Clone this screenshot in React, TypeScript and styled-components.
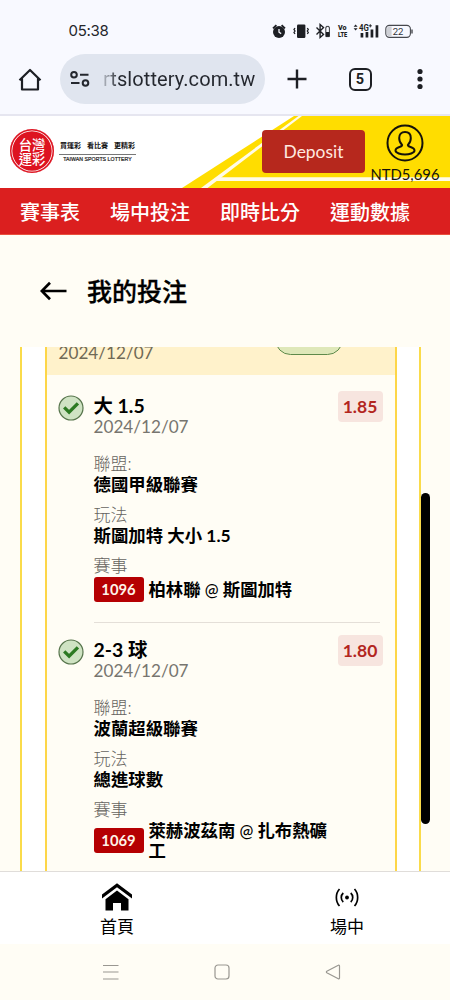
import React from "react";
import styled, { createGlobalStyle } from "styled-components";

const Global = createGlobalStyle`
  * { box-sizing: border-box; }
  body { margin: 0; background: #fffdf5; }
`;

const Screen = styled.div`
  width: 450px;
  height: 1000px;
  display: flex;
  flex-direction: column;
  overflow: hidden;
  background: #fffdf5;
  color: #000;
  font-family: Lato, "Noto Sans CJK TC", sans-serif;
`;

const StatusBar = styled.div`
  height: 54px;
  padding: 7px 36px 0 68.5px;
  display: flex;
  align-items: center;
  justify-content: space-between;
  background: #f8f9ff;
`;

const Clock = styled.span`
  font: 400 15px/20px Inter, sans-serif;
  letter-spacing: -0.3px;
  color: #24262b;
`;

const BrowserBar = styled.div`
  height: 62px;
  display: flex;
  align-items: flex-start;
  background: #f8f9ff;
  border-bottom: 2px solid #e6e6f0;
`;

const HomeButton = styled.div`
  width: 60px;
  padding: 14px 0 0 18px;
`;

const AddressBar = styled.div`
  width: 205px;
  height: 50px;
  padding-left: 10px;
  display: flex;
  align-items: center;
  border-radius: 25px;
  background: #e0e5ef;
`;

const Url = styled.span`
  flex: none;
  margin-left: 13px;
  width: 158px;
  overflow: hidden;
  white-space: nowrap;
  font: 400 20px/30px Roboto, sans-serif;
  letter-spacing: 0.08px;
  background: linear-gradient(90deg, #b9bec8 0, #24272e 16px);
  background-clip: text;
  -webkit-background-clip: text;
  color: transparent;
`;

const BrowserActions = styled.div`
  flex: 1;
  height: 50px;
  padding: 0 25px 0 22px;
  display: flex;
  align-items: center;
  justify-content: space-between;
`;

const TabCount = styled.div`
  width: 23px;
  height: 23px;
  margin-right: 2px;
  border: 2.5px solid #1d1f24;
  border-radius: 6px;
  text-align: center;
  font: 700 14.5px/19px Roboto, sans-serif;
  color: #1d1f24;
`;

const SiteHeader = styled.header`
  position: relative;
  height: 72px;
  display: flex;
  background: #fff;
`;

const HeaderArt = styled.svg`
  position: absolute;
  inset: 0;
`;

const Seal = styled.div`
  position: relative;
  margin: 13px 0 0 10px;
  width: 44px;
  height: 44px;
  border-radius: 50%;
  background: #dd1320;
  box-shadow: inset 0 0 0 1.5px #dd1320, inset 0 0 0 2.3px #fff;
  color: #fff;
  text-align: center;
  padding-top: 9px;
  font: 500 13.3px/13.5px "Noto Sans CJK TC", sans-serif;
`;

const Slogan = styled.div`
  position: relative;
  width: 77px;
  margin: 24px 0 0 5px;
  white-space: nowrap;
`;

const SloganMain = styled.div`
  display: flex;
  justify-content: space-between;
  height: 15px;
  padding: 0 1px;
  border-bottom: 1px solid #777;
  font: 700 7px/11px "Noto Sans CJK TC", sans-serif;
  color: #111;
`;

const SloganSub = styled.div`
  font: 400 5.2px/9px "Liberation Sans", sans-serif;
  -webkit-text-stroke: 0.2px #222;
  text-align: center;
  letter-spacing: 0.05px;
  color: #222;
`;

const DepositButton = styled.button`
  position: relative;
  margin: 14px 0 0 126px;
  width: 103px;
  height: 43px;
  border: 0;
  border-radius: 4px;
  background: #b6281d;
  color: #ffeae0;
  font: 400 17.4px/24px Lato, sans-serif;
`;

const Account = styled.div`
  position: relative;
  width: 80px;
  padding-top: 7px;
  display: flex;
  flex-direction: column;
  align-items: center;
  font-size: 14.8px;
  line-height: 22px;
  color: #15120a;
  white-space: nowrap;
`;

const MainNav = styled.nav`
  height: 47px;
  padding: 0 20px;
  display: flex;
  gap: 30px;
  background: #db1f1f;
  border-bottom: 1px solid #e9503d;
  color: #fff;
  font-size: 20px;
  line-height: 48px;
  white-space: nowrap;
`;

const NavItem = styled.span`
  flex: none;
  font-weight: 500;
`;

const TitleBar = styled.div`
  height: 112px;
  padding: 0 0 0 40px;
  display: flex;
  align-items: center;
  gap: 20px;
`;

const PageTitle = styled.h1`
  margin: 0;
  font-size: 25px;
  line-height: 36px;
  font-weight: 500;
  -webkit-text-stroke: 0.3px #000;
`;

const Viewport = styled.main`
  position: relative;
  height: 524px;
  padding: 0 29px 0 20px;
  overflow: hidden;
`;

const OuterCard = styled.div`
  height: 524px;
  padding: 0 22.5px;
  background: #fff;
  border: solid #fadb4a;
  border-width: 0 2.5px;
`;

const TicketCard = styled.div`
  height: 524px;
  background: #fffdf5;
  border: solid #fdd648;
  border-width: 0 2.5px;
`;

const TicketHead = styled.div`
  position: relative;
  height: 28px;
  padding-left: 12px;
  overflow: hidden;
  background: #fff2cb;
  color: #6f6956;
  font-size: 17.15px;
  line-height: 11px;
`;

const StatusPill = styled.div`
  position: absolute;
  left: 228px;
  top: -23px;
  width: 68px;
  height: 31px;
  border: 1.5px solid #5e8a4a;
  border-radius: 16px;
  background: #dfe8b9;
`;

const Bet = styled.section`
  height: 244px;
  padding: 16px 12px 0 11px;
  display: grid;
  grid-template-columns: 36px 1fr 45px;
  align-items: start;
`;

const CheckMark = styled.svg`
  margin-top: 4px;
`;

const BetBody = styled.div`
  white-space: nowrap;
`;

const Pick = styled.div`
  height: 25px;
  font-size: 19.4px;
  line-height: 29px;
  font-weight: 700;
`;

const BetDate = styled.div`
  height: 22px;
  font-size: 17.15px;
  line-height: 21px;
  color: #77756f;
`;

const Field = styled.div`
  height: 51px;
`;

const Fields = styled.div`
  padding-top: 15px;
`;

const Label = styled.div`
  height: 20px;
  font-size: 17px;
  line-height: 22px;
  font-weight: 300;
  color: #66645f;
`;

const Value = styled.div`
  font-size: 17.4px;
  line-height: 23px;
  font-weight: 700;
`;

const MatchRow = styled.div<{ $tall?: boolean }>`
  height: ${(p) => (p.$tall ? 38 : 26)}px;
  margin-top: ${(p) => (p.$tall ? 2 : 1)}px;
  display: flex;
  align-items: center;
  gap: 5px;
`;

const MatchCode = styled.span`
  flex: none;
  width: 50px;
  height: 25px;
  border-radius: 3px;
  background: #b50002;
  color: #fff3e8;
  text-align: center;
  font-size: 14.8px;
  line-height: 25px;
  font-weight: 700;
`;

const Teams = styled.span`
  padding-top: 1px;
  font-size: 17.35px;
  line-height: 19px;
  font-weight: 700;
`;

const At = styled.span`
  font-weight: 500;
  font-size: 16.5px;
`;

const Odds = styled.div`
  height: 31px;
  border-radius: 4px;
  background: #f7e5df;
  color: #b3261e;
  text-align: center;
  font-size: 17.5px;
  line-height: 31px;
  font-weight: 700;
`;

const Divider = styled.div`
  height: 1px;
  margin: 3px 15px -4px 47px;
  background: #e4dfd8;
`;

const ScrollThumb = styled.div`
  position: absolute;
  left: 421px;
  top: 146px;
  width: 9px;
  height: 331px;
  border-radius: 5px;
  background: #000;
`;

const TabBar = styled.nav`
  height: 73px;
  display: flex;
  justify-content: space-between;
  padding: 0 68px 0 82px;
  border-top: 1px solid #e0ddda;
  background: #fff;
`;

const Tab = styled.div`
  width: 70px;
  padding-top: 10px;
  display: flex;
  flex-direction: column;
  align-items: center;
  font-size: 17px;
  line-height: 24px;
`;

const TabIcon = styled.svg`
  flex: none;
  margin: 0 0 3px;
`;

const SystemNav = styled.div`
  flex: 1;
  padding: 0 109px 0 103px;
  display: flex;
  align-items: center;
  justify-content: space-between;
`;

const StatusIcons = () => (
  <svg width="142" height="20" viewBox="272 20 142 20" fill="#1d1f24">
    <g>
      <circle cx="279" cy="31" r="6" />
      <path d="M273 27.4l3.4-3.2M285 27.4l-3.4-3.2" stroke="#1d1f24" strokeWidth="1.8" />
      <path d="M279 28v3.2l2.2 1.4" stroke="#f8f9ff" strokeWidth="1.3" fill="none" />
    </g>
    <rect x="297" y="23.5" width="8.4" height="13.5" rx="1.2" />
    <path d="M295 27l-1 1.5 1 1.5-1 1.5 1 1.5M307.3 27l1 1.5-1 1.5 1 1.5-1 1.5" stroke="#1d1f24" strokeWidth="1.3" fill="none" />
    <path d="M316.5 26.5l7 7-3.4 3V23.5l3.4 3-7 7" stroke="#1d1f24" strokeWidth="1.4" fill="none" />
    <path d="M326.3 25.4h2.6v1h.5v9.2h-3.6v-9.2h.5z" fill="none" stroke="#1d1f24" strokeWidth=".9" />
    <rect x="326" y="31" width="3.4" height="4.6" />
    <text x="338" y="29.4" fontFamily="Roboto" fontWeight="900" fontSize="7.5" textLength="8.6" lengthAdjust="spacingAndGlyphs">Vo</text>
    <text x="338" y="36.4" fontFamily="Roboto" fontWeight="900" fontSize="8" textLength="9.2" lengthAdjust="spacingAndGlyphs">LTE</text>
    <path d="M353.6 25.8l2-2.4 2 2.4zM353.6 27.2l2 2.4 2-2.4z" />
    <text x="359" y="29.8" fontFamily="Roboto" fontWeight="700" fontSize="8.5" textLength="9.8" lengthAdjust="spacingAndGlyphs">4G</text>
    <path d="M368.7 24.8h3.2M370.3 23.2v3.2" stroke="#1d1f24" strokeWidth=".9" />
    <path d="M360.6 32h2.7v4.4h-2.7zM365.6 31h2.7v5.4h-2.7zM370.6 28.5h2.7v7.9h-2.7zM375.6 24.3h2.7v12.1h-2.7z" />
    <rect x="385.8" y="24.4" width="24.6" height="12" rx="3.6" fill="none" stroke="#46484e" strokeWidth="1.1" />
    <path d="M389 25.6h2.6v9.6H389a2 2 0 0 1-2-2v-5.6a2 2 0 0 1 2-2z" fill="#ced0d6" />
    <path d="M412 28.6v3.8" stroke="#46484e" strokeWidth="1.4" />
    <text x="392.4" y="34" fontFamily="Inter" fontSize="9.5" fill="#33353b" textLength="11.2">22</text>
  </svg>
);

interface BetItem {
  pick: string;
  odds: string;
  league: string;
  play: string;
  code: string;
  home: string;
  away: string[];
}

const bets: BetItem[] = [
  { pick: "大 1.5", odds: "1.85", league: "德國甲級聯賽", play: "斯圖加特 大小 1.5", code: "1096", home: "柏林聯", away: ["斯圖加特"] },
  { pick: "2-3 球", odds: "1.80", league: "波蘭超級聯賽", play: "總進球數", code: "1069", home: "萊赫波茲南", away: ["扎布熱礦", "工"] },
];

const BetEntry = ({ bet }: { bet: BetItem }) => (
  <Bet>
    <CheckMark width="26" height="26" viewBox="0 0 26 26">
      <circle cx="13" cy="13" r="12" fill="#cfe3c3" stroke="#56744b" strokeWidth="1.2" />
      <path d="M6.2 12.4l4.9 4.8 8.8-8.8" fill="none" stroke="#2c7a22" strokeWidth="3.3" />
    </CheckMark>
    <BetBody>
      <Pick>{bet.pick}</Pick>
      <BetDate>2024/12/07</BetDate>
      <Fields>
        <Field>
          <Label>聯盟:</Label>
          <Value>{bet.league}</Value>
        </Field>
        <Field>
          <Label>玩法</Label>
          <Value>{bet.play}</Value>
        </Field>
        <Label>賽事</Label>
        <MatchRow $tall={bet.away.length > 1}>
          <MatchCode>{bet.code}</MatchCode>
          <Teams>
            {bet.home} <At>@</At> {bet.away[0]}
            {bet.away[1] && <br />}
            {bet.away[1]}
          </Teams>
        </MatchRow>
      </Fields>
    </BetBody>
    <Odds>{bet.odds}</Odds>
  </Bet>
);

export default function App() {
  return (
    <Screen>
      <Global />
      <StatusBar>
        <Clock>05:38</Clock>
        <StatusIcons />
      </StatusBar>
      <BrowserBar>
        <HomeButton>
          <svg width="24" height="24" viewBox="0 0 24 24" fill="none" stroke="#1d1f24" strokeWidth="2.2" strokeLinejoin="round">
            <path d="M1.5 12.3L12 2l10.5 10.3M4 10.4V21.5h16V10.4" />
          </svg>
        </HomeButton>
        <AddressBar>
          <svg width="20" height="18" viewBox="0 0 20 18" fill="none" stroke="#24272e" strokeWidth="2">
            <circle cx="4" cy="4.7" r="2.8" />
            <circle cx="15.5" cy="13" r="2.8" />
            <path d="M10 4.7h8.5M1 13h8.5" />
          </svg>
          <Url>rtslottery.com.tw</Url>
        </AddressBar>
        <BrowserActions>
          <svg width="20" height="20" viewBox="0 0 20 20" stroke="#1d1f24" strokeWidth="2.4">
            <path d="M10 .5v19M.5 10h19" />
          </svg>
          <TabCount>5</TabCount>
          <svg width="10" height="22" viewBox="0 0 10 22" fill="#1d1f24">
            <circle cx="5" cy="3.5" r="2.6" />
            <circle cx="5" cy="11" r="2.6" />
            <circle cx="5" cy="18.5" r="2.6" />
          </svg>
        </BrowserActions>
      </BrowserBar>
      <SiteHeader>
        <HeaderArt width="450" height="72" viewBox="0 0 450 72">
          <path d="M294 0H450V72H182z" fill="#fd0" />
          <path d="M298.5 0h3.5L207.5 72h-6.5z" fill="#fffbe8" />
          <path d="M217 61.2H450v3.8H212z" fill="#fffbe8" />
        </HeaderArt>
        <Seal>台灣<br />運彩</Seal>
        <Slogan>
          <SloganMain>
            <span>買運彩</span>
            <span>看比賽</span>
            <span>更精彩</span>
          </SloganMain>
          <SloganSub>TAIWAN SPORTS LOTTERY</SloganSub>
        </Slogan>
        <DepositButton>Deposit</DepositButton>
        <Account>
          <svg width="40" height="40" viewBox="0 0 40 40" fill="none" stroke="#15120a" strokeWidth="2">
            <circle cx="20" cy="20" r="17.5" />
            <path d="M20 9c-3.800 0-5.800 2.500-5.800 6 0 2.800 1 5 2.600 6.500.9 1-.2 1.700-1.800 2.300-2.600.9-4.500 2-4.500 3.700 0 2.500 5.500 4 9.500 4s9.500-1.500 9.500-4c0-1.700-1.900-2.800-4.500-3.700-1.600-.6-2.700-1.300-1.800-2.300 1.600-1.500 2.600-3.700 2.600-6.500 0-3.500-2-6-5.800-6z" />
          </svg>
          <span>NTD5,696</span>
        </Account>
      </SiteHeader>
      <MainNav>
        <NavItem>賽事表</NavItem>
        <NavItem>場中投注</NavItem>
        <NavItem>即時比分</NavItem>
        <NavItem>運動數據</NavItem>
      </MainNav>
      <TitleBar>
        <svg width="27" height="20" viewBox="0 0 27 20" fill="none" stroke="#000" strokeWidth="2.7">
          <path d="M26.5 10H2M10 1.8L1.8 10l8.2 8.2" />
        </svg>
        <PageTitle>我的投注</PageTitle>
      </TitleBar>
      <Viewport>
        <OuterCard>
          <TicketCard>
            <TicketHead>
              2024/12/07
              <StatusPill />
            </TicketHead>
            <BetEntry bet={bets[0]} />
            <Divider />
            <BetEntry bet={bets[1]} />
          </TicketCard>
        </OuterCard>
        <ScrollThumb />
      </Viewport>
      <TabBar>
        <Tab>
          <TabIcon width="32" height="30" viewBox="0 0 32 30">
            <path d="M16 1.200L31 12.500v4L16 5.200 1 16.500v-4z" />
            <path d="M16 8.500l11.500 8.800V28.500H20V21h-8v7.500H4.500V17.300z" />
          </TabIcon>
          <span>首頁</span>
        </Tab>
        <Tab>
          <TabIcon width="26" height="30" viewBox="0 0 26 30" fill="none" stroke="#000" strokeWidth="1.7">
            <circle cx="13" cy="15.5" r="1.9" fill="#000" stroke="none" />
            <path d="M9.300 11a6 6 0 0 0 0 9M16.700 11a6 6 0 0 1 0 9M5.500 7c-4.200 4.500-4.200 12.500 0 17M20.500 7c4.200 4.500 4.200 12.500 0 17" />
          </TabIcon>
          <span>場中</span>
        </Tab>
      </TabBar>
      <SystemNav>
        <svg width="16" height="16" viewBox="0 0 16 16" stroke="#999791" strokeWidth="1.2">
          <path d="M0 1.500h15.500M0 8h15.500M0 15h15.500" />
        </svg>
        <svg width="16" height="16" viewBox="0 0 16 16" fill="none" stroke="#999791" strokeWidth="1.2">
          <rect x="1" y="1" width="14" height="14" rx="3" />
        </svg>
        <svg width="16" height="16" viewBox="0 0 16 16" fill="none" stroke="#999791" strokeWidth="1.2" strokeLinejoin="round">
          <path d="M14.500 2v12a.8.800 0 0 1-1.200.7L1.800 8.700a.8.800 0 0 1 0-1.400l11.500-6a.8.800 0 0 1 1.200.7z" />
        </svg>
      </SystemNav>
    </Screen>
  );
}
